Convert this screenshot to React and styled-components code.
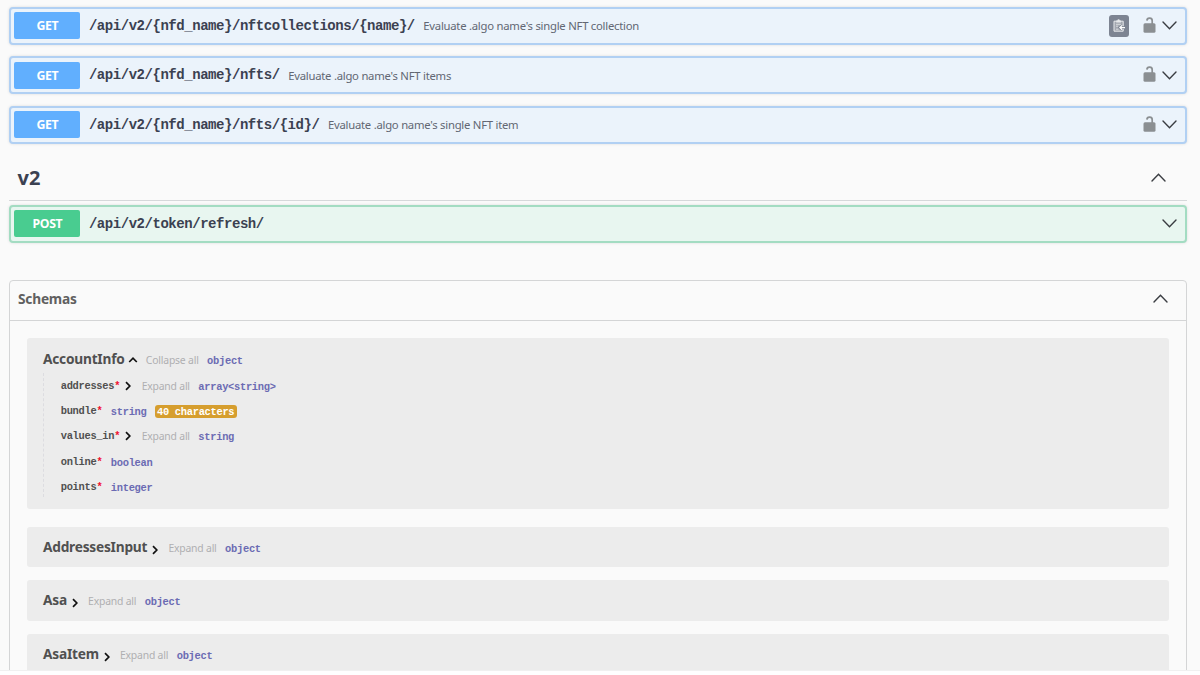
import styled, { createGlobalStyle, css } from 'styled-components';

const GlobalStyle = createGlobalStyle`
  * {
    box-sizing: border-box;
  }

  body {
    margin: 0;
    background: #fafafa;
    color: #3b4151;
    font-family: 'Noto Sans', 'Open Sans', sans-serif;
    overflow: hidden;
  }
`;

const mono = css`
  font-family: 'Liberation Mono', monospace;
  font-weight: 700;
`;

const smallMono = css`
  ${mono}
  font-size: 10.4px;
  letter-spacing: -0.29px;
  line-height: 14px;
`;

const methods = {
  GET: { solid: '#61affe', border: '#b1d0f3', fill: '#ebf3fb' },
  POST: { solid: '#49cc90', border: '#a3dcc2', fill: '#e8f6f0' },
};

const Viewport = styled.div`
  height: 670px;
  padding: 7px 13px 0 9px;
  overflow: hidden;
`;

const Footer = styled.div`
  height: 5px;
  border-top: 1px solid #f0f0f0;
  background: #fefefe;
`;

const OperationList = styled.div`
  display: flex;
  flex-direction: column;
  gap: 11.6px;
`;

const OpBlock = styled.div`
  display: flex;
  align-items: center;
  height: 37.8px;
  padding: 0 8px 0 3.4px;
  border: 2px solid ${props => methods[props.$method].border};
  border-radius: 4px;
  background: ${props => methods[props.$method].fill};
  box-shadow: 0 0 3px rgba(0, 0, 0, 0.12);
`;

const Method = styled.span`
  width: 66px;
  height: 27px;
  border-radius: 2px;
  background: ${props => methods[props.$method].solid};
  color: #fff;
  font-size: 12.3px;
  font-weight: 700;
  letter-spacing: -0.35px;
  line-height: 28px;
  text-align: center;
`;

const Path = styled.span`
  ${mono}
  margin: 0 8.5px;
  font-size: 14px;
  letter-spacing: -0.453px;
  line-height: 18px;
`;

const Summary = styled.span`
  flex: 1;
  padding-top: 1px;
  color: #626773;
  font-size: 11.3px;
  letter-spacing: -0.25px;
  line-height: 18px;
`;

const Actions = styled.div`
  display: flex;
  align-items: center;
`;

const CopyButton = styled.span`
  display: flex;
  align-items: center;
  justify-content: center;
  width: 20px;
  height: 22px;
  margin-right: 14px;
  border-radius: 3px;
  background: #7d8492;
`;

const LockSvg = styled.svg`
  width: 13px;
  height: 16px;
  margin: 0 6px 2px 0;
`;

const ArrowSvg = styled.svg`
  width: 15px;
  height: 9px;
  fill: none;
  stroke: #3a3d42;
  stroke-width: 1.4;
  stroke-linecap: round;
`;

const TagHeader = styled.h3`
  display: flex;
  align-items: center;
  justify-content: space-between;
  height: 57px;
  margin: 0 0 4.5px;
  padding: 11.5px 21px 0 8.5px;
  border-bottom: 1px solid #d6d8da;
  font-size: 20px;
`;

const Models = styled.section`
  height: 420px;
  margin-top: 37px;
  border: 1px solid #d4d5d6;
  border-radius: 4px;
`;

const ModelsHeader = styled.h4`
  display: flex;
  align-items: center;
  justify-content: space-between;
  height: 40.5px;
  margin: 0;
  padding: 0 18px 4px 8px;
  border-bottom: 1px solid #d4d5d6;
  color: #606060;
  font-size: 13.7px;
  letter-spacing: -0.2px;
`;

const ModelList = styled.div`
  display: flex;
  flex-direction: column;
  gap: 13.3px;
  padding: 17px 17px 0;
`;

const ModelCard = styled.article`
  height: ${props => (props.$open ? '171px' : '40.3px')};
  margin-bottom: ${props => (props.$open ? '4px' : '0')};
  padding: ${props => (props.$open ? '8px' : '7.5px')} 16px 0;
  border-radius: 3px;
  background: #ececec;
`;

const ModelTitle = styled.div`
  display: flex;
  align-items: center;
  height: 27px;
`;

const ModelName = styled.span`
  padding-bottom: 2px;
  color: #505050;
  font-size: 13.7px;
  font-weight: 700;
  letter-spacing: -0.22px;
  line-height: 20px;
`;

const ChevronSvg = styled.svg`
  width: 10px;
  height: 10px;
  margin: ${props => props.$margin};
  fill: none;
  stroke: #111;
  stroke-width: 1.7;
`;

const Toggle = styled.span`
  margin-right: 8.5px;
  color: #afafb1;
  font-size: 10.4px;
  letter-spacing: -0.2px;
  line-height: 14px;
`;

const Type = styled.span`
  ${smallMono}
  padding-top: 2px;
  color: #6b6bb3;
`;

const Properties = styled.div`
  height: 124px;
  padding-left: 16.7px;
  border-left: 1px dashed #dcdce0;
`;

const Property = styled.div`
  display: flex;
  align-items: center;
  height: 25.2px;
`;

const PropertyName = styled.span`
  ${smallMono}
  margin-right: ${props => (props.$expandable ? '0' : '8.5px')};
  color: #505050;
`;

const Required = styled.span`
  color: #f01030;
`;

const Constraint = styled.span`
  ${smallMono}
  height: 13px;
  margin-left: 8px;
  padding: 0 2.5px;
  border-radius: 3px;
  background: #d69e2e;
  color: #fff;
`;

const operations = [
  { path: '/api/v2/{nfd_name}/nftcollections/{name}/', summary: "Evaluate .algo name's single NFT collection", copy: true },
  { path: '/api/v2/{nfd_name}/nfts/', summary: "Evaluate .algo name's NFT items" },
  { path: '/api/v2/{nfd_name}/nfts/{id}/', summary: "Evaluate .algo name's single NFT item" },
];

const properties = [
  { name: 'addresses', type: 'array<string>', expandable: true },
  { name: 'bundle', type: 'string', constraint: '40 characters' },
  { name: 'values_in', type: 'string', expandable: true },
  { name: 'online', type: 'boolean' },
  { name: 'points', type: 'integer' },
];

const models = ['AddressesInput', 'Asa', 'AsaItem'];

function Arrow({ up }) {
  return (
    <ArrowSvg viewBox="0 0 15 9">
      <path d={up ? 'M1 8 7.5 1.3 14 8' : 'M1 1 7.5 7.7 14 1'} />
    </ArrowSvg>
  );
}

function Chevron({ up, margin }) {
  return (
    <ChevronSvg viewBox="0 0 10 10" $margin={margin}>
      <path d={up ? 'M1.2 7 5 3.2 8.8 7' : 'M3 1.2 6.8 5 3 8.8'} />
    </ChevronSvg>
  );
}

function Lock() {
  return (
    <LockSvg viewBox="0 0 13 16">
      <rect x="0.5" y="6.3" width="12" height="9.4" rx="1.5" fill="#8b8f92" />
      <path d="M9.2 7V4a2.6 2.6 0 0 0-5.3-.4" fill="none" stroke="#8b8f92" strokeWidth="1.7" />
    </LockSvg>
  );
}

function Clipboard() {
  return (
    <svg width="12" height="13" viewBox="0 0 12 13">
      <path d="M1 2.2h9.2v10H1z" fill="#a2a7b0" stroke="#e6e8eb" />
      <path d="M3.2 1.4h1.2a1.2 1.2 0 0 1 2.4 0H8v2H3.2z" fill="#e6e8eb" />
      <path d="M3 5.3h5M3 7.2h2M3 10.2h2.5" stroke="#e6e8eb" strokeWidth=".8" />
      <path d="M12 8.6H6.8M9.2 6.4 6.9 8.6l2.3 2.2" fill="none" stroke="#7d8492" strokeWidth="2.8" />
      <path d="M12 8.6H6.8M9.2 6.4 6.9 8.6l2.3 2.2" fill="none" stroke="#fff" strokeWidth="1.3" />
    </svg>
  );
}

function Operation({ method, path, summary, copy, locked }) {
  return (
    <OpBlock $method={method}>
      <Method $method={method}>{method}</Method>
      <Path>{path}</Path>
      <Summary>{summary}</Summary>
      <Actions>
        {copy && <CopyButton><Clipboard /></CopyButton>}
        {locked && <Lock />}
        <Arrow />
      </Actions>
    </OpBlock>
  );
}

function App() {
  return (
    <>
      <GlobalStyle />
      <Viewport>
        <OperationList>
          {operations.map(op => (
            <Operation key={op.path} method="GET" locked {...op} />
          ))}
        </OperationList>

        <TagHeader>
          v2
          <Arrow up />
        </TagHeader>
        <Operation method="POST" path="/api/v2/token/refresh/" />

        <Models>
          <ModelsHeader>
            Schemas
            <Arrow up />
          </ModelsHeader>
          <ModelList>
            <ModelCard $open>
              <ModelTitle>
                <ModelName>AccountInfo</ModelName>
                <Chevron up margin="0 8.3px 0 3px" />
                <Toggle>Collapse all</Toggle>
                <Type>object</Type>
              </ModelTitle>
              <Properties>
                {properties.map(({ name, type, expandable, constraint }) => (
                  <Property key={name}>
                    <PropertyName $expandable={expandable}>
                      {name}<Required>*</Required>
                    </PropertyName>
                    {expandable && <Chevron margin="0 8.5px 0 3px" />}
                    {expandable && <Toggle>Expand all</Toggle>}
                    <Type>{type}</Type>
                    {constraint && <Constraint>{constraint}</Constraint>}
                  </Property>
                ))}
              </Properties>
            </ModelCard>
            {models.map(name => (
              <ModelCard key={name}>
                <ModelTitle>
                  <ModelName>{name}</ModelName>
                  <Chevron margin="4px 8px 0 3.2px" />
                  <Toggle>Expand all</Toggle>
                  <Type>object</Type>
                </ModelTitle>
              </ModelCard>
            ))}
          </ModelList>
        </Models>
      </Viewport>
      <Footer />
    </>
  );
}

export default App;
